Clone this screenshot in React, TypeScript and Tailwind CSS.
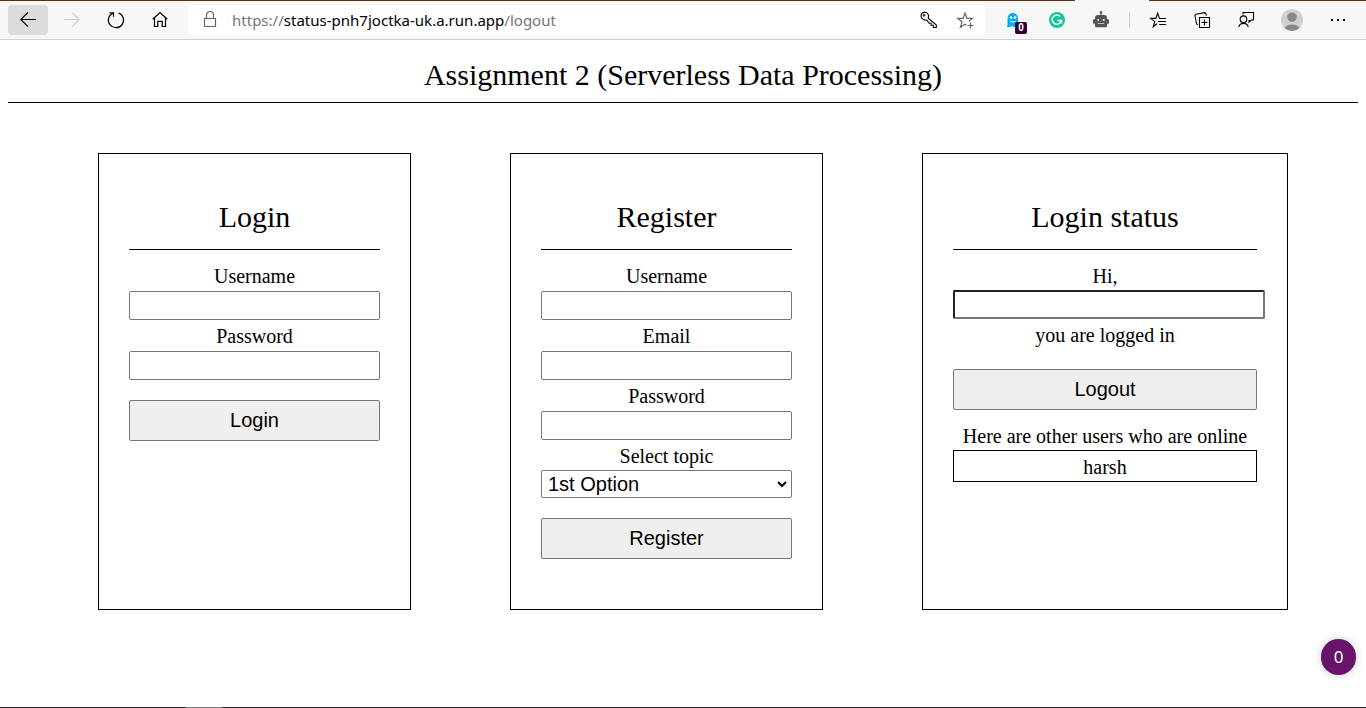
import type { ReactNode } from "react";

function Icon({ children, className = "text-black" }: { children: ReactNode; className?: string }) {
  return (
    <svg width="20" height="20" viewBox="0 0 20 20" fill="none" stroke="currentColor" strokeWidth="1.2" className={className}>
      {children}
    </svg>
  );
}

function ToolButton({ children, active = false }: { children: ReactNode; active?: boolean }) {
  return (
    <div className={`relative flex h-[30px] w-10 shrink-0 items-center justify-center rounded-sm ${active ? "bg-[#dcdcdc]" : ""}`}>
      {children}
    </div>
  );
}

function Toolbar() {
  return (
    <header className="flex h-10 flex-col border-b border-[#d0d0d0] bg-[#f7f7f7]">
      <div className="flex h-px shrink-0 justify-between">
        <div className="w-[1075px] bg-[#54301f]" />
        <div className="w-[217px] bg-[#54301f]" />
      </div>
      <div className="flex items-center gap-1 px-2 pt-1">
        <ToolButton active>
          <Icon><path d="M18 9.5H2.8M10 2.3 2.8 9.5l7.2 7.2" /></Icon>
        </ToolButton>
        <ToolButton>
          <Icon className="text-[#cfcfcf]"><path d="M2 9.5h15.2M10 2.3l7.2 7.2-7.2 7.2" /></Icon>
        </ToolButton>
        <ToolButton>
          <Icon>
            <path d="M12.600 3A7.600 7.600 0 1 1 6.800 3.200" strokeWidth="1.2" />
            <path d="M3.500 2.800h4v4" strokeWidth="1.2" />
          </Icon>
        </ToolButton>
        <ToolButton>
          <Icon><path d="M2.700 9.300 10 2.600l7.300 6.700M4.500 8v8.500h3.300v-5.100h4.400v5.100h3.300V8" strokeWidth="1.2" /></Icon>
        </ToolButton>
        <div className="ml-1 flex h-[30px] w-[797px] shrink-0 items-center rounded bg-white pl-3 pr-[10px]">
          <Icon className="text-[#666]">
            <path d="M4.500 8.500h11v8h-11zM6.500 8.500V5a3.500 3.500 0 0 1 7 0v3.500" />
          </Icon>
          <div className="ml-3 flex-1 whitespace-nowrap font-['Noto_Sans',sans-serif] text-[15px] leading-[30px] tracking-[0.01px] text-[#767676]">
            https://<span className="text-black">status-pnh7joctka-uk.a.run.app</span>/logout
          </div>
          <div className="flex gap-4">
            <Icon>
              <path d="M2 5.500 3 3.200l2.600-1 2.800.900 1.200 2.500-.300 2.600 8 6.800v2.500h-3v-2.200h-2.200v-2h-2L8 10.300l-3.400-.5-2.300-2z" strokeWidth="1.1" />
              <circle cx="5" cy="5.300" r=".9" strokeWidth="1" />
            </Icon>
            <Icon className="text-[#666]">
              <path d="M11.500 15.200 10 14.200 5.400 17.300 7 11.800 2.700 8.400h5.400L10 3l1.900 5.400h5.400l-3.700 3" />
              <path d="M15.500 12.500v6M12.500 15.500h6" />
            </Icon>
          </div>
        </div>
        <div className="ml-1 flex gap-1">
          <ToolButton>
            <Icon>
              <path d="M4 17c.8-2 .5-5 .5-7.500C4.500 5.300 6.700 3 9.800 3s5.300 2.300 5.300 6.500V17H11l-2-1-2 1z" fill="#00aef0" stroke="none" />
              <circle cx="8" cy="7.500" r="1.300" fill="white" stroke="none" />
              <circle cx="12" cy="7.500" r="1.300" fill="white" stroke="none" />
              <path d="M7.500 11q2.500 2 5 0" stroke="white" />
            </Icon>
            <span className="absolute left-[22px] top-[17px] flex h-3 w-3 items-center justify-center rounded-[2px] bg-[#330033] font-['Liberation_Sans',sans-serif] text-[10px] font-bold leading-3 text-white">0</span>
          </ToolButton>
          <ToolButton>
            <Icon>
              <circle cx="10" cy="10" r="8" fill="#15c39a" stroke="none" />
              <path d="M13.200 6.600A4.600 4.600 0 1 0 14.200 11M10.500 10.600h4v3" stroke="white" strokeWidth="1.500" />
            </Icon>
          </ToolButton>
          <ToolButton>
            <Icon className="text-[#555]">
              <path d="M9.400 5V3.800a1.400 1.400 0 1 1 1.200 0V5H13a3 3 0 0 1 3 3v1.200h1.200q.8 0 .8.8v3q0 .8-.8.8H16v2.500q0 1-1 1H5q-1 0-1-1v-2.500H2.800Q2 13.800 2 13v-3q0-.8.8-.8H4V8a3 3 0 0 1 3-3z" fill="currentColor" stroke="none" />
              <circle cx="7.300" cy="10" r="1" fill="#f7f7f7" stroke="none" />
              <circle cx="12.700" cy="10" r="1" fill="#f7f7f7" stroke="none" />
              <path d="M6.800 13.500h6.400" stroke="#bbb" strokeWidth="1" />
            </Icon>
          </ToolButton>
        </div>
        <div className="ml-1 h-4 w-px shrink-0 bg-[#cfcfcf]" />
        <div className="ml-1 flex gap-1">
          <ToolButton>
            <Icon>
              <path d="M9 13.700 5.200 16.800l1.600-5.200L2.800 8.400h5L9.700 3.200l1.700 5.100M11.200 8.500H18M10 11.500h8M11.200 14.500H18" strokeWidth="1.1" />
            </Icon>
          </ToolButton>
          <ToolButton>
            <Icon>
              <path d="M7.500 7.500h10v10h-10zM12.500 9.500v6M9.500 12.500h6" strokeWidth="1.1" />
              <path d="M5.700 14.700 4.600 14 2.900 5.500l1-1.300 8.800-1.500 1.100.8.500 2.200" strokeWidth="1.1" />
            </Icon>
          </ToolButton>
          <ToolButton>
            <Icon>
              <circle cx="7.500" cy="9.200" r="3.300" strokeWidth="1.1" />
              <path d="M2.700 17a5 5 0 0 1 9.600 0M7 4.500v-2h10.500v7.500h-2.300l-2.200 2.200V10" strokeWidth="1.1" />
            </Icon>
          </ToolButton>
          <div className="ml-[2px] flex h-[30px] w-10 items-center justify-center">
            <svg width="22" height="22" viewBox="0 0 22 22">
              <circle cx="11" cy="11" r="11" fill="#d2d0ce" />
              <circle cx="11" cy="8.200" r="4.800" fill="#8a8886" />
              <path d="M3.500 19a8 5.500 0 0 1 15 0 11 11 0 0 1-15 0z" fill="#8a8886" />
            </svg>
          </div>
          <div className="ml-[2px]">
            <ToolButton>
              <Icon><path d="M3 9h2v2H3zM9 9h2v2H9zM15 9h2v2h-2z" fill="currentColor" stroke="none" /></Icon>
            </ToolButton>
          </div>
        </div>
      </div>
    </header>
  );
}

function Card({ title, wide = false, children }: { title: string; wide?: boolean; children: ReactNode }) {
  return (
    <section className={`flex h-[457px] shrink-0 flex-col border border-black px-[30px] pt-[30px] ${wide ? "w-[366px]" : "w-[313px]"}`}>
      <h2 className="h-[66px] shrink-0 border-b border-black pt-4 text-center text-[30px] leading-[34px]">{title}</h2>
      <div className="flex flex-col pt-[10px]">{children}</div>
    </section>
  );
}

function Field({ label, type = "text" }: { label: string; type?: string }) {
  return (
    <label className="flex flex-col text-center text-[20px]">
      <span className="h-[31px] leading-[33px]">{label}</span>
      <input type={type} className="h-[29px] rounded-[2px] border border-[#767676] bg-white px-1" />
    </label>
  );
}

function SubmitButton({ children }: { children: ReactNode }) {
  return (
    <button className="mt-5 h-[41px] rounded-[2px] border border-[#767676] bg-[#efefef] font-['Liberation_Sans',sans-serif] text-[20px] leading-[23px]">
      {children}
    </button>
  );
}

export default function App() {
  return (
    <div className="flex h-[708px] w-[1366px] flex-col overflow-hidden bg-white font-['Liberation_Serif',serif] text-black">
      <Toolbar />
      <h1 className="mx-2 h-[63px] shrink-0 border-b border-black pt-[18px] text-center text-[30px] leading-[34px]">
        Assignment 2 (Serverless Data Processing)
      </h1>
      <main className="mt-[50px] flex gap-[99px] pl-[98px]">
        <Card title="Login">
          <Field label="Username" />
          <Field label="Password" type="password" />
          <SubmitButton>Login</SubmitButton>
        </Card>
        <Card title="Register">
          <Field label="Username" />
          <Field label="Email" />
          <Field label="Password" type="password" />
          <label className="flex flex-col text-center text-[20px]">
            <span className="h-[30px] leading-[33px]">Select topic</span>
            <span className="flex h-7 items-center justify-between rounded-[2px] border border-[#767676] pl-[6px] pr-1 font-['Liberation_Sans',sans-serif] leading-[26px]">
              1st Option
              <svg width="10" height="8" viewBox="0 0 10 8" fill="none" stroke="currentColor" strokeWidth="2">
                <path d="M1 2l4 4 4-4" />
              </svg>
            </span>
          </label>
          <SubmitButton>Register</SubmitButton>
        </Card>
        <Card title="Login status" wide>
          <label className="flex flex-col text-center text-[20px]">
            <span className="h-[30px] leading-[33px]">Hi,</span>
            <input className="h-[29px] w-[312px] rounded-[2px] border-2 border-b-[#767676] border-l-[#212121] border-r-[#767676] border-t-[#212121]" />
          </label>
          <p className="h-[30px] text-center text-[20px] leading-[33px]">you are logged in</p>
          <SubmitButton>Logout</SubmitButton>
          <p className="mt-[10px] h-[30px] text-center text-[20px] leading-[33px]">Here are other users who are online</p>
          <div className="h-8 border border-black text-center text-[20px] leading-[33px]">harsh</div>
        </Card>
      </main>
      <div className="mr-[10px] mt-[29px] flex h-9 w-[35px] shrink-0 items-center justify-center self-end rounded-full bg-[#681569] pb-px font-['Noto_Sans',sans-serif] text-[17px] text-white shadow-[0_0_8px_rgba(0,0,0,0.2)]">
        0
      </div>
      <footer className="mt-auto flex h-px shrink-0 bg-[#2b2523]">
        <div className="ml-[186px] w-9 bg-[#777]" />
      </footer>
    </div>
  );
}
